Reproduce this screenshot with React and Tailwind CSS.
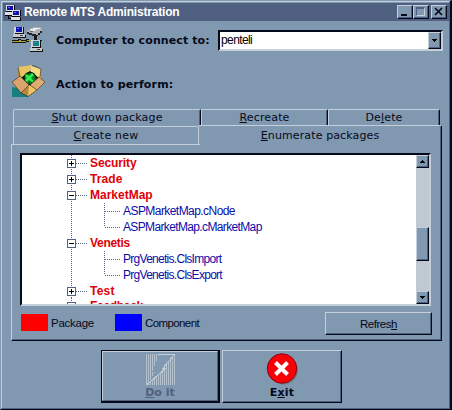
import React from "react";

const raised = "border border-t-[#c3cfdb] border-l-[#c3cfdb] border-r-[#05091a] border-b-[#05091a] shadow-[inset_-1px_-1px_#506080]";

function Monitor({ x, y, screen }) {
  return (
    <g transform={`translate(${x} ${y})`}>
      <path d="M0 0h9v8H0z" fill="#d0d4d8" />
      <path d="M9 0h1v8H1V7h8z" fill="#111" />
      <path d="M2 1h6v5H2z" fill={screen} />
      <path d="M3 2h2v1H3z" fill="#5b72ff" />
      <path d="M-1 8h12v3H-1z" fill="#c4c9ce" />
      <path d="M-1 11h13v1H-1zM11 9h1v3h-1z" fill="#111" />
      <path d="M6 9h3v1H6z" fill="#444" />
    </g>
  );
}

function TitleIcon() {
  return (
    <svg className="block h-4 w-4" viewBox="0 0 16 16" shapeRendering="crispEdges">
      <path d="M1 0h8v6H1zM0 7h8v3H0zM7 5h8v6H7zM6 12h9v3H6z" fill="#dce0e4" />
      <path d="M2 1h6v4H2zM8 6h6v4H8z" fill="#1010a8" />
      <path d="M1 6h6v1H1zM0 10h7v1H0zM9 0h1v5H9zM15 5v6h1V5zM7 11h8v1H7zM6 15h10v1H6zM15 12h1v3h-1zM3 11h1v3H3zM3 13h3v1H3z" fill="#000" />
      <path d="M3 2h2v1H3zM9 7h2v1H9z" fill="#5570ff" />
    </svg>
  );
}

function NetworkIcon() {
  return (
    <svg className="block h-8 w-8" viewBox="0 0 32 32" shapeRendering="crispEdges">
      <path d="M0 13h30v1H0zM0 15h14v1H0zM6 12h3v4H6zM14 12h3v3h-3zM22 8h3v6h-3z" fill="#15170c" />
      <path d="M1 14h13v1H1zM15 13h4v1h-4zM7 13h2v1H7z" fill="#aaa232" />
      <Monitor x={2} y={-1} screen="#1212b0" />
      <Monitor x={19} y={13} screen="#168080" />
      <path d="M15 3h3V1h3V0h8v1h1v3h-2v2h-2v2h-5V7h-3V6h-3z" fill="#aab0b6" />
      <path d="M18 2h3V1h7v1h-3v1h-2v1h-4z" fill="#eceff1" />
      <path d="M15 5h2v1h3v1h4v1h2V6h2V4h2v2h-2v2h-2v1h-6V8h-3V7h-2z" fill="#222" />
      <path d="M18 4h3v1h-3z" fill="#666" />
    </svg>
  );
}

function PackageIcon() {
  return (
    <svg className="block h-8 w-[33px]" viewBox="0 0 33 32">
      <path d="M0 32V22l7 1 10 9z" fill="#168080" />
      <path d="M7 11l9-6 13 6-1 12-12 8-9-7z" fill="#d9ad54" />
      <path d="M6 2l11 4-8 7-4-2z" fill="#b98a38" />
      <path d="M6 2L20 0l-3 7-9 6z" fill="#e7c364" />
      <path d="M19 1l10 3-1 10-10-7z" fill="#f4d982" />
      <path d="M9 13l9-7 9 7-9 8z" fill="#07150a" />
      <circle cx="18" cy="13" r="6.2" fill="#061c0a" />
      <path d="M12.5 12.500l2-3.500 4-1 4 2 1.500 4-3 4-5 1-3-3z" fill="#087a24" />
      <path d="M14 9l3 2 3-3 2 2-3 3 3 3-2 1-3-2-2 2-2-2 2-2-2-2z" fill="#30f050" />
      <path d="M0 17l8-6 9 9-8 8z" fill="#d8a36c" />
      <path d="M18 20l9-8 6 5-8 8z" fill="#dfad72" />
      <path d="M9 28l8-8 1 11z" fill="#bd863e" />
      <path d="M17 20l8 5-9 6.500z" fill="#edc763" />
      <path d="M6 2l2 9M20 0l9 4-1 8M0 17l8-6 9 9-8 8zM18 20l9-8 6 5-8 8zM9 28l7 3.500 9-6.500" fill="none" stroke="#4a3820" strokeWidth=".7" />
    </svg>
  );
}

function WinButton({ children, className = "" }) {
  return (
    <div className={`h-[14px] bg-[#8098b0] ${raised} ${className}`}>
      {children}
    </div>
  );
}

function Tab({ className, children }) {
  return (
    <div className={`flex justify-center rounded-t-[2px] border-t border-l border-[#c3cfdb] font-['DejaVu_Sans',Verdana,sans-serif] text-[11px] leading-[16px] ${className}`}>
      {children}
    </div>
  );
}

const tabEdge = "border-r border-r-[#05091a] shadow-[inset_-1px_0_#506080]";

function Row({ kind, label, expanded, last, className = "", spacing }) {
  if (kind === "package") {
    return (
      <div className={`flex h-4 shrink-0 ${className}`}>
        <svg className="h-4 w-[68px] shrink-0" viewBox="0 0 68 16" shapeRendering="crispEdges">
          <path d="M49.5 0v16M54 8.5h12" stroke="#506080" strokeDasharray="1 1" />
          <rect x="45.5" y="4.5" width="8" height="8" fill="#fff" stroke="#506080" />
          <path d={expanded ? "M47 8.5h5" : "M47 8.5h5M49.5 6v5"} stroke="#000" />
        </svg>
        <span className={`text-[12px] leading-4 font-bold text-[#e00008] ${spacing}`}>{label}</span>
      </div>
    );
  }
  return (
    <div className="flex h-4 shrink-0">
      <svg className="h-4 w-[101px] shrink-0" viewBox="0 0 101 16" shapeRendering="crispEdges">
        <path d={last ? "M49.5 0v16M82.5 0v8M83 8.5h16" : "M49.5 0v16M82.5 0v16M83 8.5h16"} stroke="#506080" strokeDasharray="1 1" />
      </svg>
      <span className={`text-[12px] leading-4 text-[#0c0ca8] ${spacing}`}>{label}</span>
    </div>
  );
}

const rows = [
  { kind: "package", label: "Security", spacing: "tracking-[-0.1px]" },
  { kind: "package", label: "Trade", spacing: "tracking-[0.1px]" },
  { kind: "package", label: "MarketMap", expanded: true, spacing: "tracking-[0px]" },
  { kind: "component", label: "ASPMarketMap.cNode", spacing: "tracking-[-0.56px]" },
  { kind: "component", label: "ASPMarketMap.cMarketMap", last: true, spacing: "tracking-[-0.64px]" },
  { kind: "package", label: "Venetis", expanded: true, spacing: "tracking-[-0.3px]" },
  { kind: "component", label: "PrgVenetis.ClsImport", spacing: "tracking-[-0.72px]" },
  { kind: "component", label: "PrgVenetis.ClsExport", last: true, spacing: "tracking-[-0.72px]" },
  { kind: "package", label: "Test", spacing: "tracking-[0.2px]" },
  { kind: "package", label: "Feedback", className: "-mt-px", spacing: "tracking-[-0.3px]" },
];

function Arrow({ up }) {
  return (
    <svg className="block h-full w-full" viewBox="0 0 11 11" shapeRendering="crispEdges">
      <path d={up ? "M5 4h1v1h1v1h1v1H3V6h1V5h1z" : "M3 4h5v1H7v1H6v1H5V6H4V5H3z"} fill="#000" />
    </svg>
  );
}

export default function App() {
  return (
    <div className="flex h-[410px] w-[452px] flex-col overflow-hidden border-t border-r-2 border-b border-l border-t-[#8098b0] border-r-[#05091a] border-b-[#05091a] border-l-[#8098b0] bg-[#8098b0] font-['Liberation_Sans',Arial,sans-serif] text-[11px] text-[#05091a]">
      <div className="flex min-h-0 flex-1 flex-col border border-t-[#c3cfdb] border-r-[#506080] border-b-[#506080] border-l-[#c3cfdb] pl-px">
        <header className="mt-px flex h-[18px] shrink-0 items-start bg-[#506080] pt-[2px] pr-[2px] pl-[2px]">
          <TitleIcon />
          <h1 className="ml-[3px] flex-1 text-[12px] leading-[14px] font-bold tracking-[-0.19px] whitespace-nowrap text-white">Remote MTS Administration</h1>
          <WinButton className="w-4"><div className="mt-[8px] ml-[3px] h-[2px] w-[6px] bg-[#05091a]" /></WinButton>
          <WinButton className="w-4"><div className="mt-px ml-[2px] h-[9px] w-[9px] border border-t-2 border-[#506080] border-r-[#c3cfdb] border-b-[#c3cfdb]" /></WinButton>
          <WinButton className="ml-[2px] w-4">
            <svg className="block h-[11px] w-[13px]" viewBox="0 0 13 11"><path d="M3 2l7 7M10 2L3 9" stroke="#05091a" strokeWidth="1.7" /></svg>
          </WinButton>
        </header>

        <section className="flex h-[40px] shrink-0 pt-[6px] pl-[9px]">
          <NetworkIcon />
          <div className="ml-3 w-[162px] pt-[6px] font-['DejaVu_Sans',Verdana,sans-serif] leading-[16px] font-bold tracking-[0.1px] whitespace-nowrap">Computer to connect to:</div>
          <div className="mt-[3px] flex h-[21px] w-[225px] border-2 border-t-[#05091a] border-r-[#c3cfdb] border-b-[#c3cfdb] border-l-[#05091a] bg-white">
            <span className="flex-1 pl-px text-[12px] leading-[17px] tracking-[-0.6px] text-black">penteli</span>
            <div className={`h-[17px] w-[13px] bg-[#8098b0] ${raised} pt-[2px]`}><svg className="block h-[11px] w-[11px]" viewBox="0 0 11 11" shapeRendering="crispEdges"><path d="M3 4h5v1H7v1H6v1H5V6H4V5H3z" /></svg></div>
          </div>
        </section>

        <section className="flex h-[48px] shrink-0 pt-[4px] pl-[9px]">
          <PackageIcon />
          <div className="ml-[11px] pt-[12px] font-['DejaVu_Sans',Verdana,sans-serif] leading-[16px] font-bold tracking-[0.17px] whitespace-nowrap">Action to perform:</div>
        </section>

        <main className="ml-[8px] w-[431px]">
          <div className="flex h-[17px] pl-[2px]">
            <Tab className={`w-[188px] ${tabEdge}`}><span className="tracking-[0.17px]"><u>S</u>hut down package</span></Tab>
            <Tab className={`w-[127px] ${tabEdge}`}><span className="tracking-[0.15px]"><u>R</u>ecreate</span></Tab>
            <Tab className={`w-[112px] ${tabEdge}`}><span className="tracking-[0.15px]">De<u>l</u>ete</span></Tab>
          </div>
          <div className="flex h-[18px]">
            <Tab className="ml-[2px] w-[185px]"><span className="leading-[17px] tracking-[0.2px]"><u>C</u>reate new</span></Tab>
            <Tab className={`-mt-px h-[19px] w-[244px] ${tabEdge}`}><span className="leading-[19px] tracking-[0.12px]"><u>E</u>numerate packages</span></Tab>
          </div>
          <div className="flex h-[197px] w-[431px] flex-col border-r border-b border-l border-r-[#05091a] border-b-[#05091a] border-l-[#c3cfdb] shadow-[inset_-1px_-1px_#506080]">
            <div className="h-px w-[188px] shrink-0 bg-[#c3cfdb]" />
            <div className="mt-[8px] ml-[8px] flex h-[153px] w-[411px] shrink-0 border-2 border-t-[#05091a] border-r-[#c3cfdb] border-b-[#c3cfdb] border-l-[#05091a] bg-white">
              <div className="flex min-w-0 flex-1 flex-col overflow-hidden whitespace-nowrap">
                {rows.map((r) => <Row key={r.label} {...r} />)}
              </div>
              <div className="flex w-[13px] flex-col bg-[#c0c8d2]">
                <div className={`h-[13px] bg-[#8098b0] ${raised}`}><Arrow up /></div>
                <div className={`mt-[59px] h-[34px] bg-[#8098b0] ${raised}`} />
                <div className={`mt-auto h-[13px] bg-[#8098b0] ${raised}`}><Arrow /></div>
              </div>
            </div>
            <div className="ml-[9px] flex pt-[6px]">
              <div className="mt-[2px] h-[17px] w-[27px] bg-[#ff0000]" />
              <span className="mt-[3px] ml-[3px] w-[64px] text-[11.5px] leading-[16px] tracking-[-0.25px]">Package</span>
              <div className="mt-[2px] h-[17px] w-[27px] bg-[#0000ff]" />
              <span className="mt-[3px] ml-[3px] w-[180px] text-[11.5px] leading-[16px] tracking-[-0.6px]">Component</span>
              <button className={`h-[23px] w-[107px] text-[11.5px] leading-[20px] tracking-[-0.45px] ${raised}`}>Refres<u>h</u></button>
            </div>
          </div>
        </main>

        <footer className="mt-[9px] ml-[98px] flex gap-[2px] font-['DejaVu_Sans',Verdana,sans-serif] font-bold">
          <button disabled className="flex h-[53px] w-[119px] flex-col items-center border border-r-2 border-b-2 border-[#05091a] text-[#506080]">
            <div className="flex h-full w-full flex-col items-center border border-t-[#c3cfdb] border-r-[#506080] border-b-[#506080] border-l-[#c3cfdb] pt-[2px]">
              <svg className="h-[31px] w-[29px] shrink-0" viewBox="0 0 29 31" shapeRendering="crispEdges">
                <path d="M.5 0v31M2.5 0v31M4.500 0v31M6.500 0v31M8.500 0v31M10.500 0v31M12.500 0v31M14.500 0v31M16.500 0v31M18.500 0v31M20.500 0v31M22.500 0v31M24.500 0v31M26.500 0v31M28.500 0v31" stroke="#b4c2d0" />
                <path d="M13 1h15L16 15h3L2 30l7-12H6z" fill="#8098b0" />
                <path d="M13 .5h15.500L17 14h3L1 30.500" stroke="#c3cfdb" fill="none" />
              </svg>
              <span className="mt-px leading-[14px]"><u>D</u>o it</span>
            </div>
          </button>
          <button className={`flex h-[53px] w-[120px] flex-col items-center pt-[2px] ${raised}`}>
            <svg className="h-[32px] w-[32px] shrink-0" viewBox="0 0 32 32">
              <circle cx="17.500" cy="17" r="14.500" fill="#737780" />
              <circle cx="16" cy="15.500" r="14.700" fill="#f80008" stroke="#900010" />
              <path d="M9.500 9.500l12 12M21.500 9.500l-12 12" stroke="#fff" strokeWidth="4" />
            </svg>
            <span className="mt-px leading-[14px] tracking-[0.2px]">E<u>x</u>it</span>
          </button>
        </footer>
      </div>
    </div>
  );
}
